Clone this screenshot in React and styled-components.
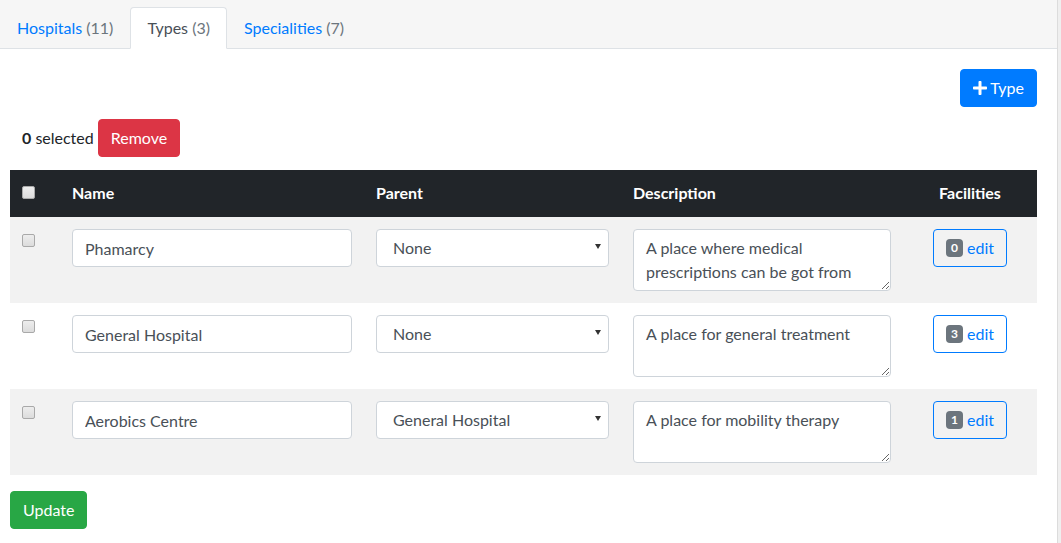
import styled, { createGlobalStyle } from "styled-components";

const GlobalStyle = createGlobalStyle`
  html, body {
    margin: 0;
    padding: 0;
    background: #efefef;
  }
  body {
    font-family: Lato, "Liberation Sans", sans-serif;
    font-size: 16px;
    line-height: 24px;
    color: #212529;
  }
  * {
    box-sizing: border-box;
  }
`;

const TYPES = [
  {
    name: "Phamarcy",
    parent: "None",
    description: "A place where medical prescriptions can be got from",
    facilities: 0,
  },
  {
    name: "General Hospital",
    parent: "None",
    description: "A place for general treatment",
    facilities: 3,
  },
  {
    name: "Aerobics Centre",
    parent: "General Hospital",
    description: "A place for mobility therapy",
    facilities: 1,
  },
];

const PlusIcon = () => (
  <svg width="14" height="16" viewBox="0 0 448 512" fill="currentColor">
    <path d="M416 208H272V64c0-17.67-14.33-32-32-32h-32c-17.67 0-32 14.33-32 32v144H32c-17.67 0-32 14.33-32 32v32c0 17.67 14.33 32 32 32h144v144c0 17.67 14.33 32 32 32h32c17.67 0 32-14.33 32-32V304h144c17.67 0 32-14.33 32-32v-32c0-17.67-14.33-32-32-32z" />
  </svg>
);

const App = () => {
  return (
    <Page>
      <GlobalStyle />
      <TabBar>
        <Tab>
          Hospitals <Count>(11)</Count>
        </Tab>
        <Tab $active>
          Types <Count>(3)</Count>
        </Tab>
        <Tab>
          Specialities <Count>(7)</Count>
        </Tab>
      </TabBar>

      <Content>
        <Toolbar>
          <Button $variant="primary">
            <PlusIcon />
            Type
          </Button>
        </Toolbar>

        <SelectionRow>
          <b>0</b>&nbsp;selected
          <Button $variant="danger">Remove</Button>
        </SelectionRow>

        <Table>
          <colgroup>
            <col style={{ width: 50 }} />
            <col style={{ width: 304 }} />
            <col style={{ width: 257 }} />
            <col style={{ width: 282 }} />
            <col style={{ width: 134 }} />
          </colgroup>
          <thead>
            <tr>
              <Th>
                <Check type="checkbox" />
              </Th>
              <Th>Name</Th>
              <Th>Parent</Th>
              <Th>Description</Th>
              <Th $center>Facilities</Th>
            </tr>
          </thead>
          <tbody>
            {TYPES.map((t, i) => (
              <Row key={t.name} $striped={i % 2 === 0}>
                <Td>
                  <Check type="checkbox" />
                </Td>
                <Td>
                  <TextInput defaultValue={t.name} />
                </Td>
                <Td>
                  <SelectWrap>
                    <Select defaultValue={t.parent}>
                      <option>None</option>
                      <option>General Hospital</option>
                    </Select>
                    <Caret />
                  </SelectWrap>
                </Td>
                <Td>
                  <TextArea defaultValue={t.description} />
                </Td>
                <Td $center>
                  <EditButton>
                    <Badge>{t.facilities}</Badge>
                    edit
                  </EditButton>
                </Td>
              </Row>
            ))}
          </tbody>
        </Table>

        <Footer>
          <Button $variant="success">Update</Button>
        </Footer>
      </Content>
    </Page>
  );
};

const COLORS = {
  primary: "#007bff",
  danger: "#dc3545",
  success: "#28a745",
};

const Page = styled.div`
  width: 1058px;
  min-height: 100vh;
  background: #fff;
  border-right: 1px solid #dcdcdc;
`;

const TabBar = styled.div`
  display: flex;
  padding-top: 7px;
  background: #f6f6f6;
  border-bottom: 1px solid #dee2e6;
`;

const Tab = styled.a`
  display: block;
  padding: 8px 16px;
  margin-bottom: -1px;
  border: 1px solid transparent;
  border-top-left-radius: 4px;
  border-top-right-radius: 4px;
  color: ${(p) => (p.$active ? "#495057" : "#007bff")};
  background: ${(p) => (p.$active ? "#fff" : "transparent")};
  border-color: ${(p) => (p.$active ? "#dee2e6 #dee2e6 #fff" : "transparent")};
  cursor: pointer;
`;

const Count = styled.span`
  color: #6c757d;
`;

const Content = styled.div`
  padding: 20px 20px 0 10px;
`;

const Toolbar = styled.div`
  display: flex;
  justify-content: flex-end;
`;

const Button = styled.button`
  display: inline-flex;
  align-items: center;
  gap: 3px;
  height: 38px;
  padding: 6px 12px;
  font-family: inherit;
  font-size: 16px;
  line-height: 24px;
  color: #fff;
  background: ${(p) => COLORS[p.$variant]};
  border: 1px solid ${(p) => COLORS[p.$variant]};
  border-radius: 4px;
  cursor: pointer;

  svg {
    margin-top: -1px;
  }
`;

const SelectionRow = styled.div`
  display: flex;
  align-items: center;
  margin-top: 12px;
  padding-left: 12px;

  b {
    font-weight: 700;
  }

  ${Button} {
    margin-left: 4px;
  }
`;

const Table = styled.table`
  width: 100%;
  margin-top: 13px;
  border-collapse: collapse;
  table-layout: fixed;
`;

const Th = styled.th`
  padding: 11px 12px 12px;
  background: #212529;
  color: #fff;
  font-weight: 700;
  text-align: ${(p) => (p.$center ? "center" : "left")};
  vertical-align: top;
`;

const Row = styled.tr`
  background: ${(p) => (p.$striped ? "#f2f2f2" : "#fff")};
`;

const Td = styled.td`
  padding: 12px;
  vertical-align: top;
  text-align: ${(p) => (p.$center ? "center" : "left")};
`;

const Check = styled.input`
  appearance: none;
  display: block;
  width: 13px;
  height: 13px;
  margin: 5px 0 0;
  border: 1px solid #a9a9a9;
  border-radius: 2px;
  background: linear-gradient(#ededed, #dcdcdc);
`;

const fieldBase = `
  display: block;
  width: 100%;
  padding: 6px 12px;
  font-family: inherit;
  font-size: 16px;
  line-height: 24px;
  color: #495057;
  background: #fff;
  border: 1px solid #ced4da;
  border-radius: 4px;
  outline: none;
`;

const TextInput = styled.input`
  ${fieldBase}
  height: 38px;
`;

const SelectWrap = styled.div`
  position: relative;
`;

const Select = styled.select`
  ${fieldBase}
  height: 38px;
  padding-left: 16px;
  appearance: none;
`;

const Caret = styled.span`
  position: absolute;
  right: 8px;
  top: 15px;
  width: 0;
  height: 0;
  border-left: 3.5px solid transparent;
  border-right: 3.5px solid transparent;
  border-top: 5px solid #333;
  pointer-events: none;
`;

const TextArea = styled.textarea`
  ${fieldBase}
  height: 62px;
  resize: vertical;
`;

const EditButton = styled.button`
  display: inline-flex;
  align-items: center;
  height: 38px;
  padding: 6px 12px;
  font-family: inherit;
  font-size: 16px;
  line-height: 24px;
  color: #007bff;
  background: transparent;
  border: 1px solid #007bff;
  border-radius: 4px;
  cursor: pointer;
`;

const Badge = styled.span`
  display: inline-block;
  margin-right: 4px;
  padding: 3px 5px;
  font-size: 12px;
  font-weight: 700;
  line-height: 12px;
  color: #fff;
  background: #6c757d;
  border-radius: 4px;
`;

const Footer = styled.div`
  margin-top: 16px;
`;

export default App;
